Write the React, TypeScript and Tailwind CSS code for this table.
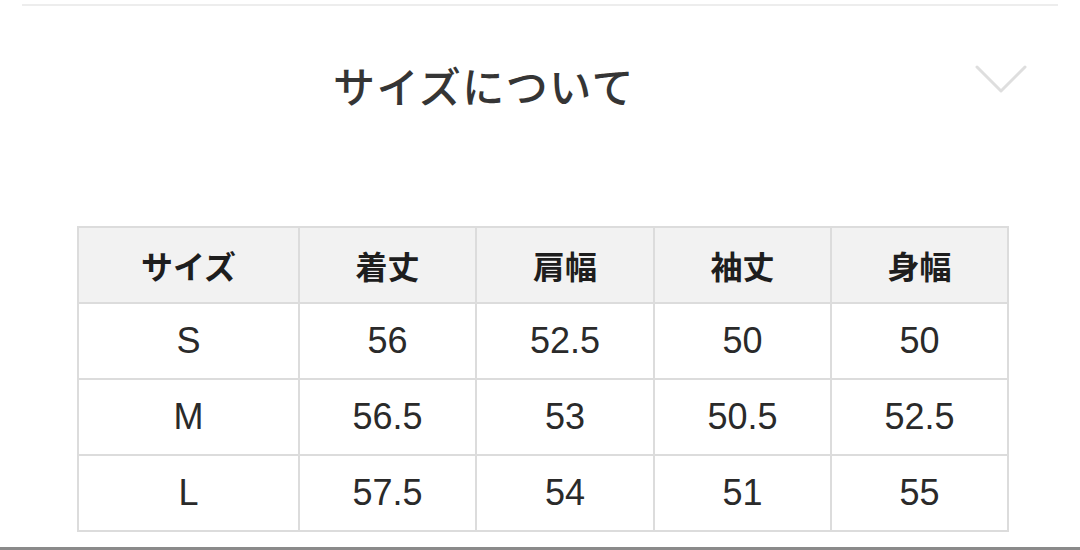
const headers = ['サイズ', '着丈', '肩幅', '袖丈', '身幅'];

const rows = [
  ['S', '56', '52.5', '50', '50'],
  ['M', '56.5', '53', '50.5', '52.5'],
  ['L', '57.5', '54', '51', '55'],
];

const widths = ['w-[221px]', 'w-[177px]', 'w-[178px]', 'w-[177px]', 'w-[177px]'];

export default function App() {
  return (
    <div className="flex h-[550px] w-[1080px] flex-col overflow-hidden bg-white font-['Liberation_Sans','Noto_Sans_CJK_JP',sans-serif] text-[#333]">
      {/* 上の区切り線 */}
      <div className="mx-[22px] mt-[4px] h-[2px] bg-[#ededed]" />

      {/* 見出し */}
      <div className="flex h-[162px] items-center">
        <h2 className="mb-[4px] pl-[333px] font-['Noto_Sans_CJK_JP',sans-serif] text-[42px] font-medium leading-none tracking-[1.5px] text-[#353535]">
          サイズについて
        </h2>
        <svg
          className="mb-[14px] ml-auto mr-[53px]"
          width="52"
          height="30"
          viewBox="0 0 52 30"
          fill="none"
        >
          <path d="M2 2 L26 26 L50 2" stroke="#dedede" strokeWidth="3" strokeLinecap="round" strokeLinejoin="round" />
        </svg>
      </div>

      {/* サイズ表 */}
      <table className="ml-[77px] mt-[58px] w-[930px] table-fixed border-collapse border-2 border-[#dcdcdc]">
        <thead>
          <tr className="bg-[#f2f2f2]">
            {headers.map((h, i) => (
              <th
                key={h}
                className={`${widths[i]} h-[76px] border-2 border-[#dcdcdc] text-center font-['Noto_Sans_CJK_JP',sans-serif] text-[32px] font-bold text-[#1e1e1e]`}
              >
                {h}
              </th>
            ))}
          </tr>
        </thead>
        <tbody>
          {rows.map((r) => (
            <tr key={r[0]}>
              {r.map((v, i) => (
                <td
                  key={i}
                  className="h-[76px] border-2 border-[#dcdcdc] text-center text-[36px] text-[#2a2a2a]"
                >
                  {v}
                </td>
              ))}
            </tr>
          ))}
        </tbody>
      </table>

      {/* 下の区切り線 */}
      <div className="mt-auto h-[3px] bg-[#8a8a8a]" />
    </div>
  );
}
